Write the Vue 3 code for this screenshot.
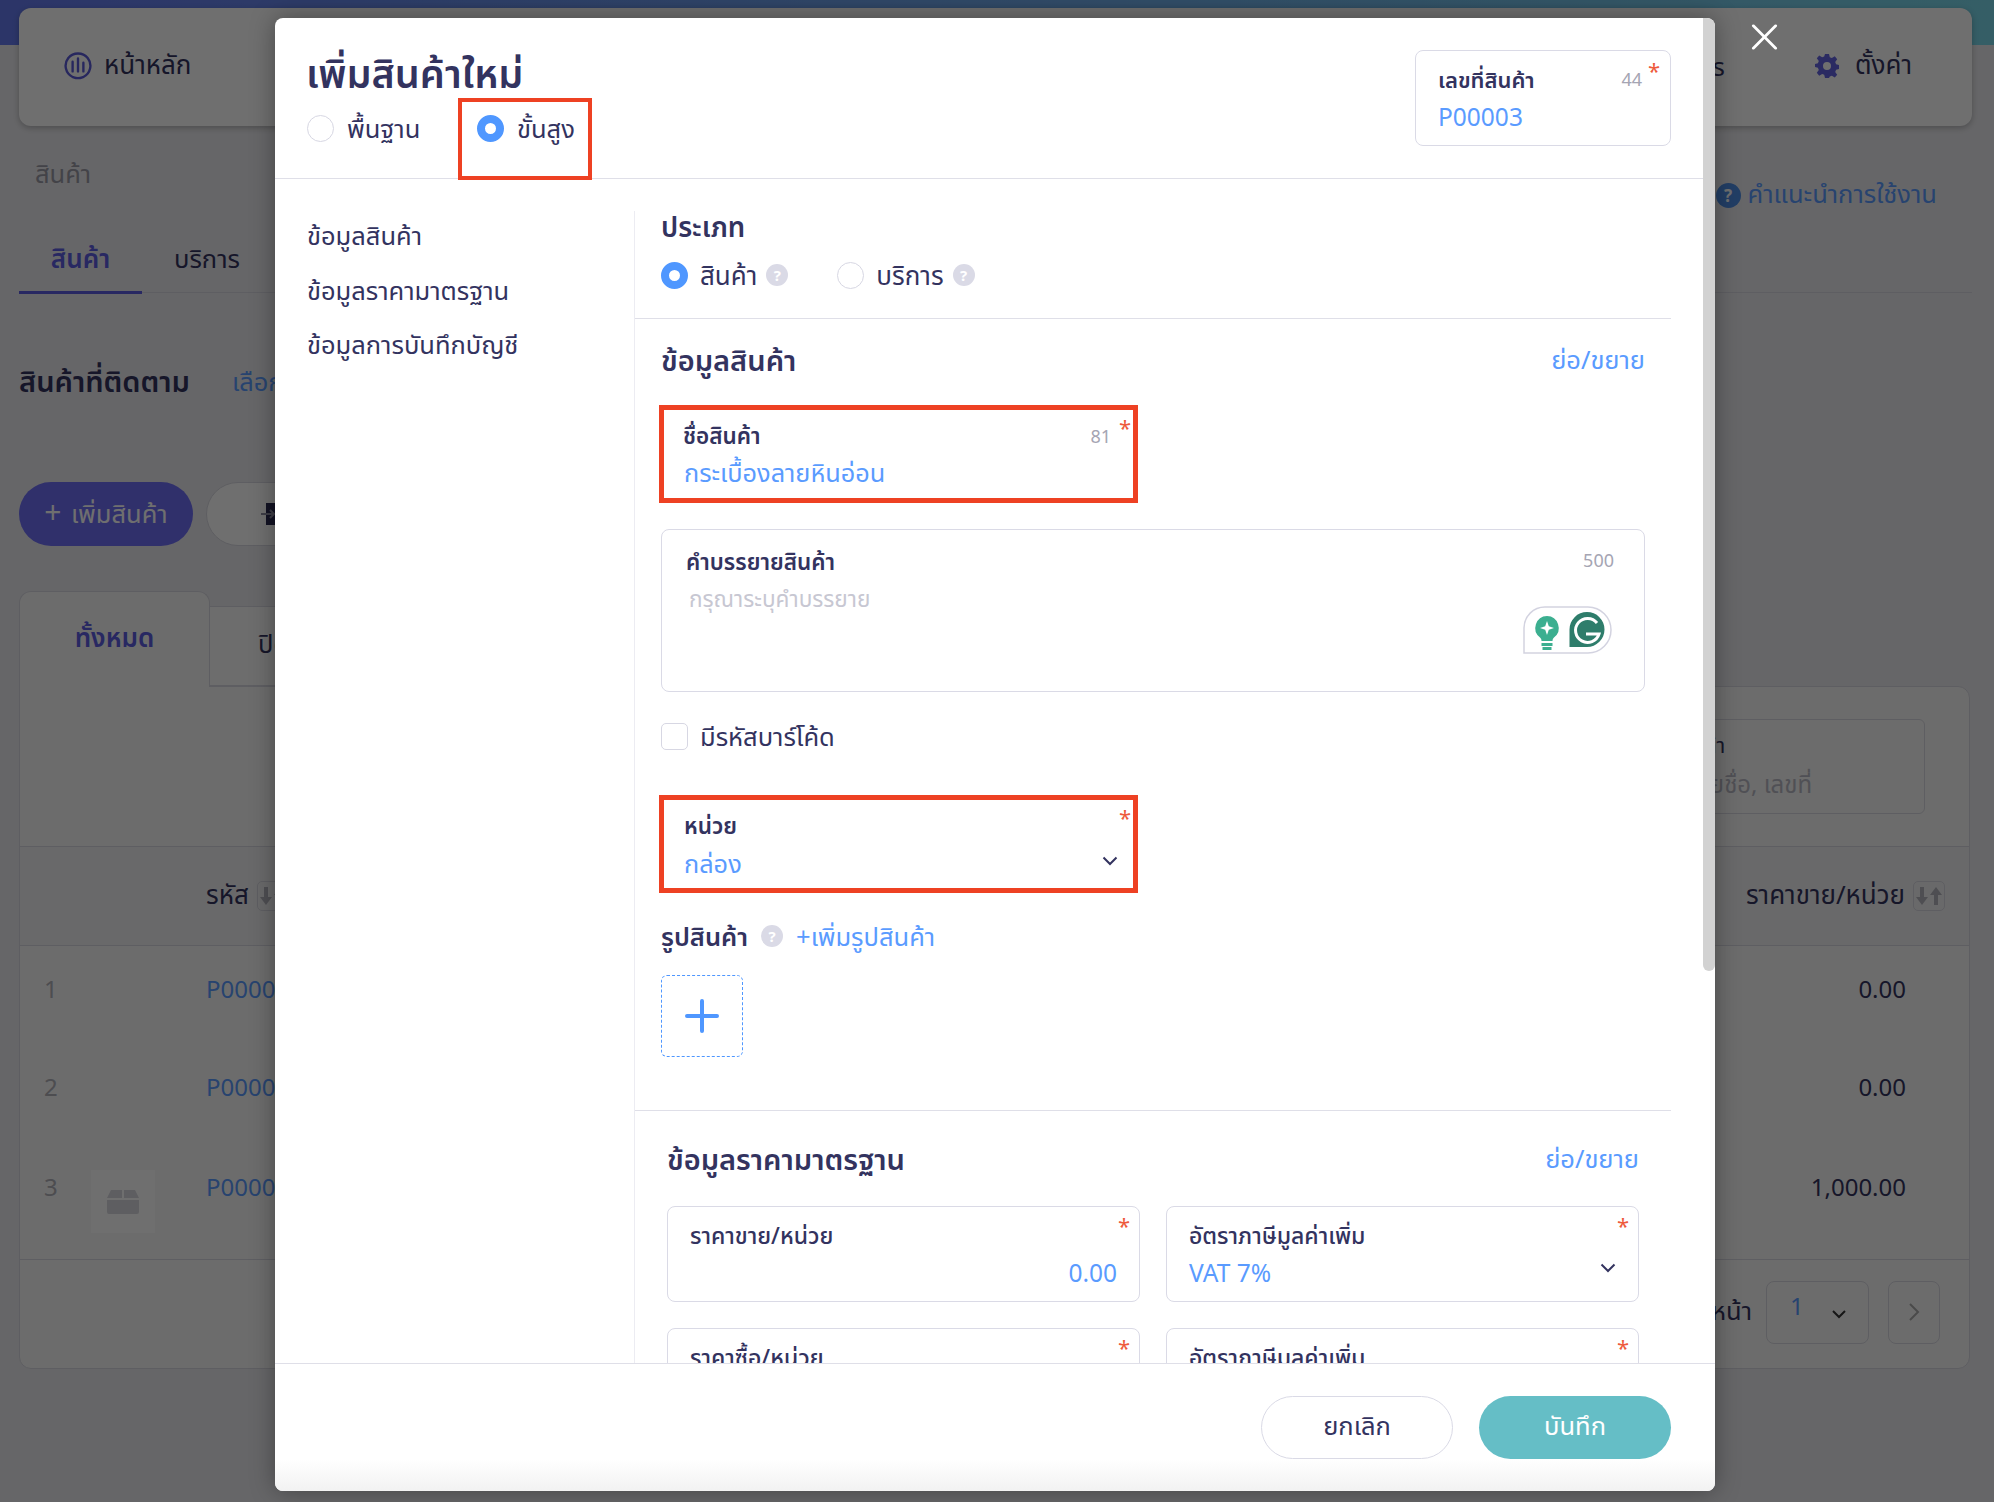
<script setup>
const rows = [
  { n: 1, code: 'P00001', name: 'สินค้าตัวอย่าง', price: '0.00', thumb: false },
  { n: 2, code: 'P00002', name: 'สินค้าตัวอย่าง', price: '0.00', thumb: false },
  { n: 3, code: 'P00003', name: 'สินค้าตัวอย่าง', price: '1,000.00', thumb: true },
]
</script>

<template>
  <div class="page">
    <nav class="topnav">
      <div class="nav-item">
        <svg class="nav-ico" viewBox="0 0 26 26" fill="none" stroke="#5a5ad8" stroke-width="2.2" stroke-linecap="round">
          <path d="M8 23.2A11.5 11.5 0 1 1 18 23.2" />
          <path d="M8 9v9M13 6v12M18 10v8M9 23.5c2.5 1 5.500 1 8 0" />
        </svg>
        <span>หน้าหลัก</span>
      </div>
      <div class="nav-right">
        <div class="nav-item"><span>Apps</span></div>
        <div class="nav-item settings">
          <svg class="gear" viewBox="0 0 24 24" fill="#6464e0">
            <path fill-rule="evenodd" d="M10 0h4l.8 3.300 2 .8L19.800 2.300l2.400 2.900-2 2.800.9 2.200 3 .8v3.900l-3 .8-.9 2.200 2 2.800-2.400 2.900-3-1.800-2 .8L14 24h-4l-.8-3.300-2-.8-3 1.800-2.400-2.900 2-2.800-.9-2.200-3-.8V10.100l3-.8.9-2.200-2-2.800 2.400-2.900 3 1.800 2-.8zM12 8a4 4 0 1 0 0 8 4 4 0 0 0 0-8z" />
          </svg>
          <span>ตั้งค่า</span>
        </div>
      </div>
    </nav>

    <header class="subhead">
      <div>
        <div class="crumb">สินค้า</div>
        <div class="pagetabs">
          <span class="pagetab active">สินค้า</span>
          <span class="pagetab">บริการ</span>
        </div>
      </div>
      <a class="guide"><span class="guide-q">?</span>คำแนะนำการใช้งาน</a>
    </header>

    <div class="follow">
      <strong>สินค้าที่ติดตาม</strong>
      <a>เลือกสินค้าที่ติดตาม</a>
    </div>

    <div class="actions">
      <button class="add-btn"><span class="add-plus">+</span> เพิ่มสินค้า</button>
      <button class="import-btn">
        <svg viewBox="0 0 20 22" width="20" height="22"><path d="M5 0h15v22H5z" fill="#2a2a50" /><path d="M0 11h13M9 7l4 4-4 4" fill="none" stroke="#8d8da0" stroke-width="2" /></svg>
        นำเข้าไฟล์
      </button>
    </div>

    <div class="tabs">
      <div class="tab tab-active">ทั้งหมด</div>
      <div class="tab">ปิดการขาย</div>
    </div>

    <section class="card">
      <div class="filter">
        <div class="search">
          <div class="search-title">ค้นหาสินค้า</div>
          <div class="search-hint">ค้นหาด้วยชื่อ, เลขที่</div>
        </div>
      </div>
      <div class="thead">
        <div class="c-code">รหัส
          <span class="sort"><svg viewBox="0 0 26 20" width="26" height="20" fill="#b4b4bc"><path d="M4 1h4v10h4l-6 8-6-8h4zM19 19h4V9h3l-6-8-6 8h5z" /></svg></span>
        </div>
        <div class="c-price">ราคาขาย/หน่วย
          <span class="sort"><svg viewBox="0 0 26 20" width="26" height="20" fill="#b4b4bc"><path d="M4 1h4v10h4l-6 8-6-8h4zM18 19h4V9h4l-6-8-6 8h4z" /></svg></span>
        </div>
      </div>
      <div class="tbody">
        <div v-for="r in rows" :key="r.n" class="trow">
          <div class="c-n">{{ r.n }}</div>
          <div class="c-thumb">
            <div v-if="r.thumb" class="thumb">
              <svg viewBox="0 0 32 24" width="32" height="24" fill="#d8d8de"><path d="M4 0h11v8H0zM17 0h11l4 8H17zM0 10h32v12a2 2 0 0 1-2 2H2a2 2 0 0 1-2-2z" /></svg>
            </div>
          </div>
          <a class="c-link">{{ r.code }}</a>
          <div class="c-val">{{ r.price }}</div>
        </div>
      </div>
      <div class="pager">
        <span>หน้า</span>
        <div class="pg-select"><b>1</b>
          <svg viewBox="0 0 16 10" width="16" height="10" fill="none" stroke="#333" stroke-width="2"><path d="M2 2l6 6 6-6" /></svg>
        </div>
        <div class="pg-next">
          <svg viewBox="0 0 12 20" width="12" height="20" fill="none" stroke="#aaa" stroke-width="2"><path d="M2 2l8 8-8 8" /></svg>
        </div>
      </div>
    </section>

    <div class="overlay"></div>

    <svg class="close" viewBox="0 0 28 28" stroke="#fff" stroke-width="3" stroke-linecap="round" fill="none"><path d="M2 2l24 24M26 2L2 26" /></svg>

    <div class="modal">
      <header class="m-head">
        <div class="m-head-left">
          <h1>เพิ่มสินค้าใหม่</h1>
          <div class="mode">
            <label class="radio-row"><span class="radio"></span>พื้นฐาน</label>
            <label class="radio-row mode-adv"><span class="radio on"></span>ขั้นสูง</label>
          </div>
        </div>
        <div class="field doc-no">
          <div class="f-top"><span class="f-label">เลขที่สินค้า</span><span class="f-count">44</span></div>
          <div class="f-value num">P00003</div>
          <span class="req">*</span>
        </div>
      </header>

      <div class="m-body">
        <aside class="m-side">
          <div>ข้อมูลสินค้า</div>
          <div>ข้อมูลราคามาตรฐาน</div>
          <div>ข้อมูลการบันทึกบัญชี</div>
        </aside>

        <main class="m-main">
          <section class="sec-type">
            <h2>ประเภท</h2>
            <div class="type-row">
              <label class="radio-row"><span class="radio on"></span>สินค้า<span class="help">?</span></label>
              <label class="radio-row"><span class="radio"></span>บริการ<span class="help">?</span></label>
            </div>
          </section>

          <section class="sec-info">
            <div class="sec-head">
              <h2>ข้อมูลสินค้า</h2>
              <a>ย่อ/ขยาย</a>
            </div>

            <div class="field name-field marked">
              <div class="f-top"><span class="f-label">ชื่อสินค้า</span><span class="f-count">81</span></div>
              <div class="f-value">กระเบื้องลายหินอ่อน</div>
              <span class="req">*</span>
            </div>

            <div class="field desc">
              <div class="f-top"><span class="f-label">คำบรรยายสินค้า</span><span class="f-count">500</span></div>
              <div class="f-place">กรุณาระบุคำบรรยาย</div>
              <svg class="gram" viewBox="0 0 90 48">
                <path d="M1 47V22A21 21 0 0 1 22 1H65A23 23 0 0 1 65 47Z" fill="#fff" stroke="#d3d3e0" stroke-width="1.500" />
                <path d="M24 10a12 12 0 0 1 7 21.500c-1 .9-1.500 2-1.500 3.500h-11c0-1.500-.5-2.600-1.500-3.500A12 12 0 0 1 24 10z" fill="#3caf90" />
                <rect x="18.500" y="37" width="11" height="3" fill="#3caf90" />
                <rect x="19.500" y="41" width="9" height="3" fill="#3caf90" />
                <path d="M24 15l1.800 5.200 5.200 1.800-5.200 1.800L24 29l-1.800-5.200-5.200-1.800 5.200-1.800z" fill="#fff" />
                <path d="M64 6a17.500 17.500 0 0 1 0 35H46.500V23.500A17.500 17.500 0 0 1 64 6z" fill="#2e7d6b" />
                <path d="M74 17a12 12 0 1 0 2 11H63" fill="none" stroke="#fff" stroke-width="3" />
              </svg>
            </div>

            <label class="check-row"><span class="check"></span>มีรหัสบาร์โค้ด</label>

            <div class="field name-field marked unit">
              <div class="f-top"><span class="f-label">หน่วย</span></div>
              <div class="f-value">กล่อง</div>
              <svg class="chev" viewBox="0 0 16 10" fill="none" stroke="#33335f" stroke-width="2"><path d="M1.500 1.500L8 8l6.500-6.500" /></svg>
              <span class="req">*</span>
            </div>

            <div class="pic-head">
              <h3>รูปสินค้า</h3>
              <span class="help">?</span>
              <a>+เพิ่มรูปสินค้า</a>
            </div>
            <div class="upload">
              <svg viewBox="0 0 36 36" width="36" height="36" stroke="#4f97ff" stroke-width="4" stroke-linecap="round"><path d="M18 3v30M3 18h30" /></svg>
            </div>
          </section>

          <section class="sec-price">
            <div class="sec-head">
              <h2>ข้อมูลราคามาตรฐาน</h2>
              <a>ย่อ/ขยาย</a>
            </div>
            <div class="price-grid">
              <div class="field pf">
                <div class="f-label light">ราคาขาย/หน่วย</div>
                <div class="f-value right num">0.00</div>
                <span class="req">*</span>
              </div>
              <div class="field pf">
                <div class="f-label light">อัตราภาษีมูลค่าเพิ่ม</div>
                <div class="f-value num">VAT 7%</div>
                <svg class="chev" viewBox="0 0 16 10" fill="none" stroke="#33335f" stroke-width="2"><path d="M1.500 1.500L8 8l6.500-6.500" /></svg>
                <span class="req">*</span>
              </div>
              <div class="field pf">
                <div class="f-label light">ราคาซื้อ/หน่วย</div>
                <div class="f-value right num">0.00</div>
                <span class="req">*</span>
              </div>
              <div class="field pf">
                <div class="f-label light">อัตราภาษีมูลค่าเพิ่ม</div>
                <div class="f-value num">VAT 7%</div>
                <span class="req">*</span>
              </div>
            </div>
          </section>
        </main>
      </div>

      <footer class="m-foot">
        <button class="btn-cancel">ยกเลิก</button>
        <button class="btn-save">บันทึก</button>
      </footer>

      <div class="scrollbar"></div>
    </div>
  </div>
</template>

<style>
html, body { margin: 0; background: #ebebef; }
</style>

<style scoped>
* { box-sizing: border-box; }
h1, h2, h3 { margin: 0; }
a { color: #5a9bff; }
.page {
  position: relative;
  width: 1994px;
  height: 1502px;
  overflow: hidden;
  padding: 8px 22px 0 19px;
  font-family: "Noto Sans", "Noto Sans Thai", "DejaVu Sans", sans-serif;
  font-size: 25.5px;
  color: #33335f;
  background: linear-gradient(90deg, #657aef, #7ad8ea) top / 100% 45px no-repeat, #ebebef;
}
.topnav {
  height: 118px;
  display: flex;
  align-items: center;
  justify-content: space-between;
  padding: 0 60px 2px 45px;
  background: #fff;
  border-radius: 12px;
  box-shadow: 0 2px 6px rgba(0, 0, 0, .25);
}
.nav-item { display: flex; align-items: center; gap: 12px; color: #33335f; font-size: 26px; }
.nav-right { display: flex; gap: 90px; }
.nav-item.settings { gap: 16px; }
.nav-ico { width: 28px; height: 28px; }
.gear { width: 24px; height: 26px; }
.subhead {
  height: 167px;
  display: flex;
  justify-content: space-between;
  border-bottom: 1px solid #d8d8e0;
}
.crumb { margin: 31px 0 0 16px; color: #9a9aa6; line-height: 32px; }
.pagetabs { display: flex; margin-top: 38px; height: 66px; align-items: flex-start; }
.pagetab { width: 123px; text-align: center; padding-top: 13px; line-height: 36px; }
.pagetab + .pagetab { width: auto; margin-left: 32px; }
.pagetab.active { color: #5c5ce0; font-weight: 600; height: 67px; border-bottom: 3px solid #5c5ce0; font-size: 26px; }
.guide { display: flex; align-items: center; gap: 7px; margin: 55px 35px 0 0; height: 28px; }
.guide-q {
  width: 25px; height: 25px; border-radius: 50%;
  background: #4f8fe8; color: #fff;
  display: grid; place-items: center;
  font-size: 17px; font-weight: 700; line-height: 1;
}
.follow { display: flex; gap: 42px; align-items: center; margin-top: 71px; height: 38px; }
.follow strong { font-size: 29px; font-weight: 600; color: #33335f; }
.actions { display: flex; gap: 13px; margin-top: 80px; }
.add-btn {
  width: 174px; height: 64px; border: 0; border-radius: 32px;
  background: #6e6ef6; color: #fff;
  font: inherit; padding: 0 0 3px;
}
.add-plus { font-size: 30px; margin-right: 3px; }
.import-btn {
  width: 220px; height: 64px; border: 1px solid #d8d8e0; border-radius: 32px;
  background: #fff; font: inherit; color: #33335f;
  display: flex; align-items: center; gap: 10px; padding-left: 54px;
}
.tabs { display: flex; align-items: flex-end; height: 95px; margin-top: 45px; position: relative; }
.tab {
  width: 240px; height: 80px;
  border: 1px solid #d8d8e0; border-left: 0;
  background: #fbfbfb;
  padding: 18px 0 0 48px; line-height: 36px;
}
.tab-active {
  width: 191px; height: 96px; margin-bottom: -1px;
  border: 1px solid #d8d8e0; border-bottom: 0; border-radius: 12px 12px 0 0;
  background: #f8f8f8; color: #5c5ce0; font-weight: 600; font-size: 26px;
  padding: 30px 0 0; text-align: center; line-height: 30px;
}
.card {
  width: 1951px;
  border: 1px solid #d8d8e0;
  border-radius: 0 12px 12px 12px;
  background: #f8f8f8;
}
.filter {
  height: 160px;
  padding: 32px 44px 0 0;
  display: flex;
  justify-content: flex-end;
  border-bottom: 1px solid #d8d8e0;
}
.search { width: 300px; height: 95px; border: 1px solid #d8d8e0; border-radius: 6px; padding: 10px 4px; }
.search-title { font-size: 21.500px; line-height: 30px; }
.search-hint { font-size: 24px; line-height: 36px; margin-top: 6px; color: #b8b8c4; }
.thead {
  height: 99px;
  display: flex;
  justify-content: space-between;
  align-items: center;
  padding: 0 24px 0 186px;
  border-bottom: 1px solid #d8d8e0;
  background: #f2f2f4;
  font-size: 26px;
}
.c-code, .c-price { display: flex; align-items: center; gap: 8px; }
.sort {
  display: inline-flex; justify-content: center; align-items: center;
  width: 32px; height: 30px;
  border: 1px solid #d8d8e0; border-radius: 5px;
}
.tbody { border-bottom: 1px solid #d8d8e0; }
.trow { display: flex; padding: 27px 63px 27px 24px; min-height: 98px; font-size: 24px; }
.trow:last-child { padding: 29px 63px 26px 24px; }
.c-n { width: 47px; color: #b0b0b8; line-height: 32px; }
.c-thumb { width: 115px; }
.thumb { width: 64px; height: 63px; background: #fff; display: grid; place-items: center; margin-top: -1px; }
.c-link { flex: 1; color: #5a9bff; line-height: 32px; }
.c-val { line-height: 32px; }
.pager { height: 108px; display: flex; align-items: center; justify-content: flex-end; padding: 0 29px 4px 0; gap: 14px; }
.pg-select {
  width: 103px; height: 63px; border: 1px solid #d8d8e0; border-radius: 8px;
  display: flex; align-items: center; justify-content: space-between; padding: 0 21px 14px 24px;
}
.pg-select b { font-weight: 400; color: #5a9bff; font-size: 24px; margin-left: -1px; }
.pg-select svg { margin-top: 18px; }
.pg-next {
  width: 52px; height: 63px; border: 1px solid #d8d8e0; border-radius: 8px;
  display: grid; place-items: center; margin-left: 5px;
}
.overlay { position: absolute; inset: 0; background: rgba(0, 0, 0, .565); }
.close { position: absolute; left: 1751px; top: 24px; width: 27px; height: 26px; }

.modal {
  position: absolute;
  left: 275px;
  top: 18px;
  width: 1440px;
  height: 1473px;
  background: #fff;
  border-radius: 8px;
  overflow: hidden;
  display: flex;
  flex-direction: column;
  box-shadow: 0 0 24px rgba(0, 0, 0, .35);
}
.scrollbar {
  position: absolute;
  right: 0;
  top: 0;
  width: 12px;
  height: 953px;
  border-radius: 0 8px 6px 6px;
  background: #d2d2d2;
}
.m-head {
  flex: none;
  height: 161px;
  display: flex;
  justify-content: space-between;
  align-items: flex-start;
  padding: 0 44px 0 32px;
  border-bottom: 1px solid #dfdfe8;
}
h1 { font-size: 39.500px; font-weight: 600; line-height: 52px; margin: 29px 0 0 -1px; color: #33335f; }
.mode { display: flex; margin-top: 12px; }
.mode .radio-row { width: 170px; gap: 13px; }
.mode-adv { position: relative; }
.mode-adv::after {
  content: "";
  box-sizing: border-box;
  position: absolute;
  left: -19px;
  top: -13px;
  width: 134px;
  height: 82px;
  border: 4px solid #ee4123;
}
.radio-row { display: inline-flex; align-items: center; gap: 12px; line-height: 34px; }
.radio {
  width: 27px; height: 27px; border-radius: 50%;
  border: 1px solid #d7d7e3; background: #fff; flex: none;
}
.radio.on { border: 8px solid #4f97ff; }
.help {
  width: 22px; height: 22px; border-radius: 50%;
  background: #dadae6; color: #fff;
  display: inline-grid; place-items: center;
  font-size: 15px; font-weight: 700; line-height: 1;
}
.field {
  position: relative;
  border: 1px solid #dadae6;
  border-radius: 8px;
  padding: 14px 20px 0 22px;
}
.doc-no { width: 256px; height: 96px; margin-top: 32px; padding-top: 13px; }
.f-top { display: flex; justify-content: space-between; align-items: center; padding-right: 8px; }
.f-label { font-size: 22px; font-weight: 600; line-height: 30px; color: #33335f; }
.f-label.light { font-weight: 500; font-size: 23px; }
.desc .f-label, .marked .f-label { font-size: 22.500px; }
.f-count { font-size: 18px; color: #a5a5b3; }
.desc .f-count { margin-top: -4px; }
.f-value { font-size: 25.300px; line-height: 36px; color: #5a9bff; margin-top: 5px; }
.f-value.num { font-size: 24.500px; }
.f-value.right { text-align: right; }
.f-place { font-size: 22.600px; line-height: 30px; color: #c7c7d2; margin-top: 7px; margin-left: 3px; }
.req { position: absolute; right: 10px; top: 7px; color: #ee5a3c; font-size: 22px; line-height: 24px; }

.m-body { flex: 1; display: flex; overflow: hidden; min-height: 0; }
.m-side {
  width: 359px; flex: none; padding: 41px 0 0 32px;
  display: flex; flex-direction: column; gap: 23.500px;
  line-height: 31px;
}
.m-main {
  width: 1037px;
  margin-top: 32px;
  border-left: 1px solid #ececf2;
}
.m-main h2 { font-size: 29px; font-weight: 600; line-height: 36px; color: #33335f; }
.sec-type { display: flex; flex-direction: column; height: 108px; padding-left: 26px; border-bottom: 1px solid #dfdfe8; }
.m-main .sec-type h2 { margin-top: -2px; font-size: 27.500px; }
.type-row { display: flex; gap: 49px; margin-top: 13px; font-size: 26px; }
.type-row .help { margin-left: -3px; }
.sec-info { padding: 22px 26px 0 26px; height: 792px; border-bottom: 1px solid #dfdfe8; }
.sec-head { display: flex; justify-content: space-between; align-items: center; }
.sec-head a { padding-top: 1px; margin-bottom: -1px; }
.name-field { width: 475px; height: 90px; }
.marked { margin: 26px 0 0 -2px; border: 5px solid #ee4123; border-radius: 0; width: 479px; height: 98px; padding: 11px 16px 0 19px; }
.marked .f-value { margin: 3px 0 0 1px; }
.marked .f-top { padding-right: 6px; }
.marked .req { right: 2px; top: 5px; }
.unit .f-label { margin-left: 1px; }
.desc { height: 163px; margin-top: 26px; padding: 17px 22px 0 24px; }
.gram { position: absolute; right: 31px; top: 76px; width: 90px; height: 48px; }
.check-row { display: flex; align-items: center; gap: 12px; margin-top: 29px; line-height: 30px; }
.check { width: 27px; height: 27px; border: 1px solid #d7d7e3; border-radius: 5px; }
.marked.unit { margin-top: 44px; }
.marked.unit .f-value { margin-top: 4px; }
.chev { position: absolute; right: 15px; top: 56px; width: 16px; height: 10px; }
.pic-head { display: flex; align-items: center; margin-top: 25px; line-height: 36px; }
.pic-head h3 { font-size: 25.500px; font-weight: 600; color: #33335f; }
.pic-head .help { margin-left: 13px; margin-right: 13px; }
.upload {
  width: 82px; height: 82px; margin-top: 21px;
  border: 1px dashed #4f97ff; border-radius: 6px;
  display: grid; place-items: center;
}
.sec-price { padding: 29px 32px 0; }
.price-grid { display: grid; grid-template-columns: 473px 473px; gap: 26px 26px; margin-top: 28px; }
.pf { height: 96px; padding: 13px 22px 0 22px; }
.pf .chev { right: 22px; top: 56px; }
.pf .req { right: 9px; top: 6px; }
.pf .f-label { line-height: 30px; }
.pf .f-value { margin-top: 5px; }

.m-foot {
  flex: none;
  height: 128px;
  display: flex;
  justify-content: flex-end;
  gap: 26px;
  padding: 32px 44px 0 0;
  border-top: 1px solid #dfdfe8;
  background: linear-gradient(#fff 75%, #f2f2f2);
}
.m-foot button { width: 192px; height: 63px; border-radius: 32px; font: inherit; padding: 0 0 2px; }
.btn-cancel { background: #fff; border: 1px solid #dadae6; color: #33335f; }
.btn-save { background: #65bec6; border: 0; color: #fff; }
</style>
